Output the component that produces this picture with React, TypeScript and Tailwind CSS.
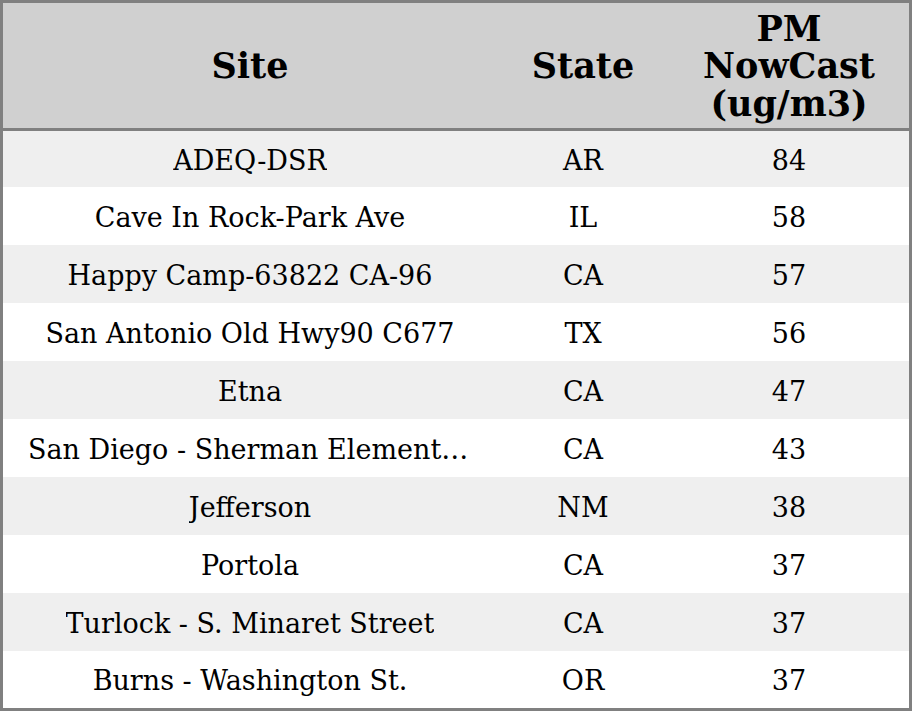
import React from "react";

const rows: [string, string, string][] = [
  ["ADEQ-DSR", "AR", "84"],
  ["Cave In Rock-Park Ave", "IL", "58"],
  ["Happy Camp-63822 CA-96", "CA", "57"],
  ["San Antonio Old Hwy90 C677", "TX", "56"],
  ["Etna", "CA", "47"],
  ["San Diego - Sherman Elementary School", "CA", "43"],
  ["Jefferson", "NM", "38"],
  ["Portola", "CA", "37"],
  ["Turlock - S. Minaret Street", "CA", "37"],
  ["Burns - Washington St.", "OR", "37"],
];

const heights = ["h-[56px]", "h-[58px]", "h-[58px]", "h-[58px]", "h-[58px]", "h-[58px]", "h-[58px]", "h-[58px]", "h-[58px]", "h-[57px]"];

export default function App() {
  return (
    <div
      className="w-[912px] h-[711px] border-[3px] border-[#808080] bg-white text-black flex flex-col"
      style={{ fontFamily: '"DejaVu Serif", serif' }}
    >
      <div className="grid grid-cols-[494px_172px_240px] h-[128px] shrink-0 bg-[#d0d0d0] border-b-[3px] border-[#808080] font-bold text-[35px] leading-[37.5px] pt-[1px]">
        <div className="flex items-center justify-center text-center">Site</div>
        <div className="flex items-center justify-center text-center">State</div>
        <div className="flex items-center justify-center text-center">
          PM
          <br />
          NowCast
          <br />
          (ug/m3)
        </div>
      </div>
      {rows.map((r, i) => (
        <div
          key={i}
          className={`grid grid-cols-[494px_172px_240px] shrink-0 text-[27px] leading-[32px] pt-[3px] ${heights[i]} ${i % 2 === 0 ? "bg-[#efefef]" : "bg-white"}`}
        >
          <div className="flex items-center justify-center px-[25px] min-w-0">
            <span className="truncate">{r[0]}</span>
          </div>
          <div className="flex items-center justify-center">{r[1]}</div>
          <div className="flex items-center justify-center">{r[2]}</div>
        </div>
      ))}
    </div>
  );
}
